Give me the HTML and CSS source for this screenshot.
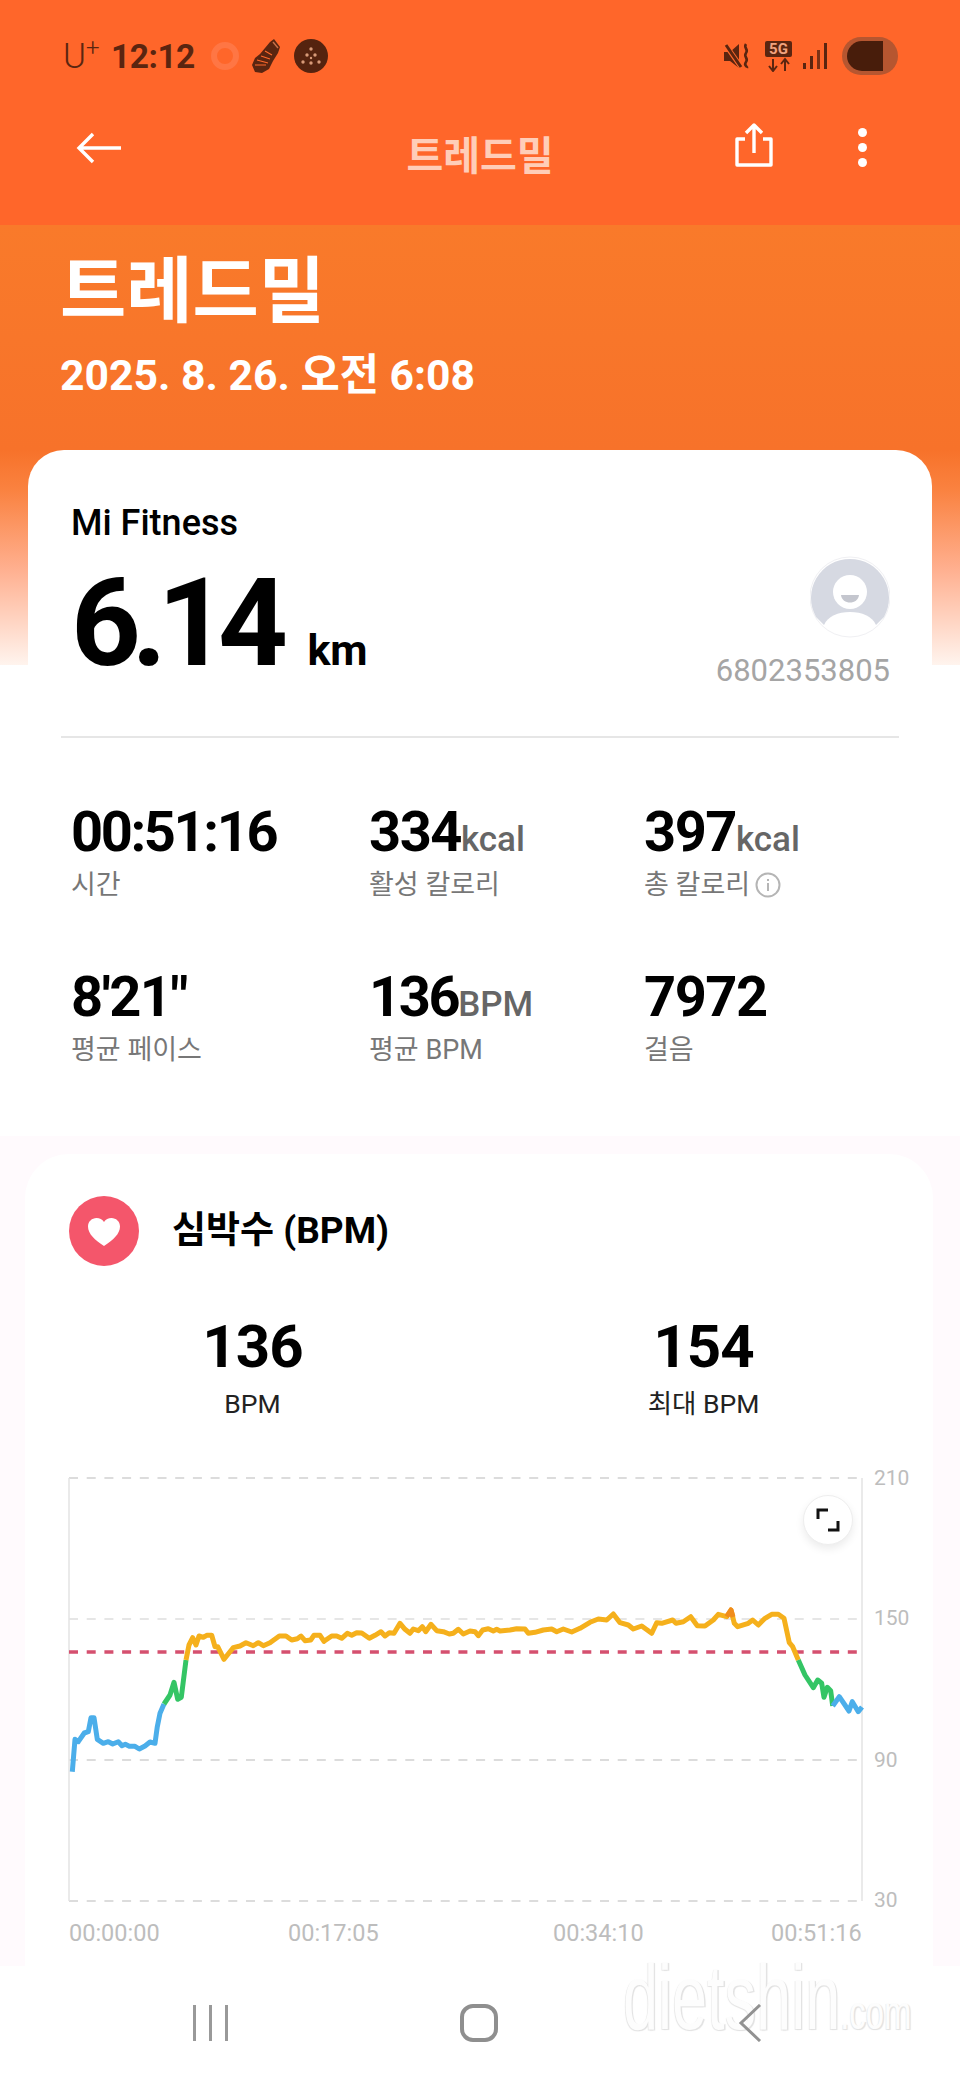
FILE: index.html
```html
<!DOCTYPE html>
<html lang="ko">
<head>
  <meta charset="UTF-8">
  <meta name="viewport" content="width=device-width, initial-scale=1">
  <title>트레드밀</title>
  <link rel="stylesheet" href="styles.css">
</head>
<body>
  <div class="page">
    <!-- status bar -->
    <div class="status">
      <div class="status-left">
        <span class="carrier">U<sup>+</sup></span>
        <span class="clock">12:12</span>
        <svg class="ico-ring" viewBox="0 0 28 28"><circle cx="14" cy="14" r="11" fill="none" stroke="#ff7644" stroke-width="6"/></svg>
        <svg class="ico-shoe" viewBox="0 0 29 34"><path d="M22 0l6 8-2 6-5 8-4 8-7 4-7-1-3-7 3-7 5-4 5-6 5-6z" fill="#5a2510"/><path d="M3 26l11 0M5 21l11 3M9 17l9 3M13 12l7 4" stroke="#ff6a2c" stroke-width="1.1" fill="none"/><path d="M21 3l5 6" stroke="#c9714a" stroke-width="1.4" fill="none"/></svg>
        <svg class="ico-dots" viewBox="0 0 34 34"><circle cx="17" cy="17" r="17" fill="#55230f"/><g fill="#d89a78"><circle cx="17" cy="10" r="1.7"/><circle cx="13" cy="16" r="1.7"/><circle cx="21" cy="16" r="1.7"/><circle cx="17" cy="19" r="1.2"/><circle cx="9" cy="23" r="1.7"/><circle cx="17" cy="24" r="1.7"/><circle cx="25" cy="23" r="1.7"/></g></svg>
      </div>
      <div class="status-right">
        <svg class="ico-mute" viewBox="0 0 27 26"><path d="M0 9h6l9-8v24l-9-7H0z" fill="#5a2510"/><path d="M1 1l16 23" stroke="#ff6a2c" stroke-width="5"/><path d="M2 2l15 22" stroke="#5a2510" stroke-width="3"/><path d="M22 1c-3 4 3 5 0 9s3 5 0 9 2 4 1 6" stroke="#5a2510" stroke-width="2.6" fill="none"/></svg>
        <svg class="ico-5g" viewBox="0 0 27 31"><rect width="27" height="16" rx="2" fill="#5a2510"/><path d="M8 18v11M4 25l4 5 4-5M20 30V19M16 23l4-5 4 5" stroke="#5a2510" stroke-width="2" fill="none"/></svg>
        <span class="tag-5g">5G</span>
        <svg class="ico-signal" viewBox="0 0 25 26"><g fill="#5a2510"><rect x="0" y="20" width="3" height="6"/><rect x="7" y="13" width="3" height="13"/><rect x="14" y="7" width="3" height="19" opacity=".8"/><rect x="21" y="0" width="3" height="26"/></g></svg>
        <div class="battery"><div class="battery-fill"></div></div>
      </div>
    </div>

    <!-- app bar -->
    <div class="appbar">
      <svg class="ico-back" viewBox="0 0 46 32"><path d="M45 16H3M17 2L3 16l14 14" fill="none" stroke="#fff" stroke-width="3.4"/></svg>
      <div class="appbar-title">트레드밀</div>
      <div class="appbar-actions">
        <svg class="ico-share" viewBox="0 0 38 44"><path d="M10 16H2v26h34V16h-8M19 30V3M11 10l8-8 8 8" fill="none" stroke="#fff" stroke-width="3.4" stroke-linejoin="round"/></svg>
        <div class="kebab"><i></i><i></i><i></i></div>
      </div>
    </div>

    <div class="hero">
      <h1>트레드밀</h1>
      <div class="hero-date">2025. 8. 26. 오전 6:08</div>
    </div>

    <!-- 요약 카드 -->
    <section class="summary">
      <div class="source">Mi Fitness</div>
      <div class="dist-row">
        <div class="dist"><span class="dist-num">6.14</span><span class="dist-unit">km</span></div>
        <div class="user">
          <svg class="avatar" viewBox="0 0 80 84">
            <circle cx="40" cy="42" r="40" fill="#fff" stroke="#f0f0f3" stroke-width="1"/>
            <path d="M6 62A39 39 0 1 1 74 62L66 70H14z" fill="#d6d9e2"/>
            <circle cx="40" cy="37" r="17" fill="#fff"/>
            <path d="M31 40h18c-1 10-17 10-18 0z" fill="#c4c6ce"/>
            <path d="M14 70c4-9 14-13 26-13s22 4 26 13c-12 14-40 14-52 0z" fill="#fff"/>
          </svg>
          <div class="user-id">6802353805</div>
        </div>
      </div>
      <div class="divider"></div>
      <div class="stats">
        <div class="stat"><div class="stat-val stat-tight">00:51:16</div><div class="stat-label">시간</div></div>
        <div class="stat"><div class="stat-val">334<small>kcal</small></div><div class="stat-label">활성 칼로리</div></div>
        <div class="stat">
          <div class="stat-val">397<small>kcal</small></div>
          <div class="stat-label">총 칼로리<svg class="ico-info" viewBox="0 0 26 26"><circle cx="13" cy="13" r="11.5" fill="none" stroke="#b5b5b5" stroke-width="2"/><path d="M13 11v8M13 7v2" stroke="#b5b5b5" stroke-width="2"/></svg></div>
        </div>
        <div class="stat"><div class="stat-val">8'21"</div><div class="stat-label">평균 페이스</div></div>
        <div class="stat"><div class="stat-val stat-tight">136<small>BPM</small></div><div class="stat-label">평균 BPM</div></div>
        <div class="stat"><div class="stat-val">7972</div><div class="stat-label">걸음</div></div>
      </div>
    </section>

    <!-- 심박수 -->
    <div class="lower">
      <section class="hr-card">
        <div class="hr-head">
          <svg class="ico-heart" viewBox="0 0 70 70"><circle cx="35" cy="35" r="35" fill="#f4566b"/><path d="M35 50C26 44 19 38 19 30.5 19 25.5 23 22 27.5 22c3 0 6 1.500 7.500 4 1.500-2.500 4.500-4 7.500-4C47 22 51 25.500 51 30.500 51 38 44 44 35 50z" fill="#fff"/></svg>
          <h2>심박수 (BPM)</h2>
        </div>
        <div class="hr-stats">
          <div class="hr-stat"><div class="hr-num">136</div><div class="hr-label">BPM</div></div>
          <div class="hr-stat"><div class="hr-num">154</div><div class="hr-label">최대 BPM</div></div>
        </div>
        <div class="chart">
          <!-- viewBox uses page coordinates -->
          <svg class="chart-svg" viewBox="60 1460 860 490">
            <g stroke="#dcdcdc" stroke-width="2" stroke-dasharray="9 8.7" fill="none">
              <path d="M69 1478H862"/>
              <path d="M69 1619H862" stroke="#e6e6e6"/>
              <path d="M69 1760H862"/>
              <path d="M69 1901H862"/>
            </g>
            <path d="M69 1478V1901M862 1478V1901" stroke="#e4e4e4" stroke-width="1.5" fill="none"/>
            <path d="M69 1652H862" stroke="#d5506f" stroke-width="3.5" stroke-dasharray="9 8.7" fill="none"/>
            <g fill="none" stroke-width="5" stroke-linejoin="round">
              <polyline stroke="#4baeea" points="72.3,1771.7 75,1739.3 78.3,1741.7 84.3,1733 88.3,1731.7 91,1717.7 94,1717.7 97.3,1739.3 103.3,1743.3 108.3,1741.7 112.7,1744 118.3,1741.7 122,1745.7 125.3,1744.3 129.3,1746.3 135,1746.3 139.3,1749 145,1746 150,1742 155,1743.3 157.3,1726.7 160,1713.3 164,1704"/>
              <polyline stroke="#34c565" points="164,1704 170,1695 174,1682.3 177.7,1699.3 181.3,1697.3 186,1660"/>
              <polyline stroke="#f5b01c" points="186,1660 189,1645 192.7,1637.7 196,1645 199,1636 203.3,1637.3 206.7,1635.3 211.7,1635.3 215,1646.7 217.7,1646.7 224,1659.3 230,1651.7 233.3,1647.7 240,1646 246,1642.7 253.3,1645.7 258.3,1642.7 263.3,1645.7 270,1642.7 279.3,1636 286,1636 291.7,1640 297.3,1638.7 301,1636 305,1640.7 310.7,1640 314,1635.3 320,1635.3 324,1641.3 331.7,1636 336.7,1636 341.7,1638.3 347.3,1633.3 351.7,1635.3 356.7,1632.7 361.7,1633 369.3,1638.3 375,1635.3 381,1631.7 385,1636 389.3,1632.7 394,1633.3 400,1623.3 405,1629.3 410,1633.3 413.3,1629 418.3,1630.7 422.3,1626.7 425.7,1631.7 431,1624.3 436.7,1630.7 443.3,1631.7 449.3,1634 453.3,1633.3 458.3,1629.3 463.3,1634 470,1631 475,1631.7 478.3,1635.7 482.7,1630 488.3,1628.7 493.3,1631 496.7,1629.3 500,1631 510,1630 516.7,1628.7 525,1629 528.3,1633.3 535,1632.3 543.3,1630 551.7,1629 556.7,1631.7 563.3,1629 571.7,1632 580,1628.3 590,1622.3 598.3,1619 606.7,1620 613.3,1614 620,1622.7 628.3,1625 633.3,1629 641.7,1626 651.7,1633.3 656.7,1622.7 661.7,1623.3 672.7,1620 676,1623.3 683.3,1621.7 690.7,1616.7 697.3,1625.7 705,1626 713.3,1620 718.3,1614.3 726.7,1616.7 731,1610 734.3,1623.3 737.7,1626.7 748.3,1623.3 752.7,1620 758.3,1625 765,1618.3 771.7,1614.3 778.3,1614.3 784,1618.3 789.3,1642.7 792.7,1646.7 798.3,1660"/>
              <polyline stroke="#f08c1c" points="726.7,1616.7 731,1610 733,1617"/>
              <polyline stroke="#34c565" points="798.3,1660 805,1675 813.3,1687.7 817.7,1680 821.7,1683.3 824,1697.3 827.3,1687.3 830.7,1690.7 832.7,1706"/>
              <polyline stroke="#4baeea" points="832.7,1706 839.3,1696.7 849,1711 852.3,1701.7 858.3,1711.7 862,1707"/>
            </g>
            <g class="axis-y">
              <text x="874" y="1485">210</text>
              <text x="874" y="1625">150</text>
              <text x="874" y="1767">90</text>
              <text x="874" y="1907">30</text>
            </g>
            <g class="axis-x">
              <text x="69" y="1941">00:00:00</text>
              <text x="288" y="1941">00:17:05</text>
              <text x="553" y="1941">00:34:10</text>
              <text x="771" y="1941">00:51:16</text>
            </g>
          </svg>
          <button class="expand">
            <svg viewBox="0 0 24 24"><path d="M2 11V2h10M22 13v9H12" fill="none" stroke="#111" stroke-width="3"/></svg>
          </button>
        </div>
      </section>
    </div>

    <!-- 하단 내비게이션 -->
    <div class="navbar">
      <div class="nav-recent"><i></i><i></i><i></i></div>
      <div class="nav-home"></div>
      <svg class="nav-back" viewBox="0 0 24 38"><path d="M22 1L3 19l19 18" fill="none" stroke="#929292" stroke-width="3"/></svg>
      <div class="watermark">dietshin<small>.com</small></div>
    </div>
  </div>
</body>
</html>
```

FILE: styles.css
```css
* {
  margin: 0;
  padding: 0;
  box-sizing: border-box;
}

body {
  background: #fff;
  font-family: Roboto, "Noto Sans CJK KR", sans-serif;
  color: #000;
}

.page {
  position: relative;
  width: 960px;
  height: 2080px;
  overflow: hidden;
  background:
    linear-gradient(#ff662a, #ff662a) 0 0 / 100% 225px no-repeat,
    linear-gradient(#f97a2a 0, #f7722a 225px, #fa8240 265px, #ffb090 345px, #fff4ee 440px) 0 225px / 100% 440px no-repeat,
    #fff;
}

/* status bar */
.status {
  height: 112px;
  padding: 0 62px 0 63px;
  display: flex;
  align-items: center;
  justify-content: space-between;
  color: #5a2510;
}

.status-left,
.status-right {
  display: flex;
  align-items: center;
}

.carrier {
  width: 48px;
  font-size: 35px;
  font-weight: 300;
  line-height: 1;
}

.carrier sup {
  font-size: 24px;
  line-height: 0;
  vertical-align: 12px;
}

.clock {
  font-size: 33.5px;
  font-weight: 700;
  letter-spacing: -.5px;
}

.ico-ring { width: 28px; height: 28px; margin-left: 16px; }
.ico-shoe { width: 29px; height: 34px; margin-left: 13px; }
.ico-dots { width: 34px; height: 34px; margin-left: 13px; }
.ico-mute { width: 27px; height: 26px; }
.ico-5g { width: 27px; height: 31px; margin-left: 14px; }
.ico-signal { width: 25px; height: 26px; margin-left: 11px; }

.tag-5g {
  width: 27px;
  margin-left: -27px;
  margin-top: -15px;
  text-align: center;
  font-size: 15px;
  font-weight: 700;
  color: #f2a27e;
}

.battery {
  width: 56px;
  height: 38px;
  margin-left: 14px;
  padding: 4px 0 0 5px;
  border-radius: 19px;
  background: #b65630;
}

.battery-fill {
  width: 36px;
  height: 30px;
  border-radius: 15px 0 0 15px;
  background: #481d0b;
}

/* app bar */
.appbar {
  height: 72px;
  padding: 0 76px;
  display: grid;
  grid-template-columns: 1fr auto 1fr;
  align-items: center;
}

.ico-back { width: 46px; height: 32px; }

.appbar-title {
  margin-top: 10px;
  font-size: 40px;
  font-weight: 700;
  color: #ffcdb8;
}

.appbar-actions {
  display: flex;
  justify-content: flex-end;
  align-items: center;
  gap: 85px;
  margin-right: 17px;
}

.ico-share { width: 38px; height: 44px; margin-top: -6px; }

.kebab {
  display: flex;
  flex-direction: column;
  gap: 6px;
  margin-top: -2px;
}

.kebab i {
  display: block;
  width: 9px;
  height: 9px;
  border-radius: 50%;
  background: #fff;
}

/* hero */
.hero {
  height: 266px;
  padding: 66px 0 0 60px;
  color: #fff;
}

.hero h1 {
  font-size: 72px;
  line-height: 84px;
  font-weight: 700;
}

.hero-date {
  margin-top: 16px;
  font-size: 42.7px;
  line-height: 50px;
  font-weight: 700;
}

/* summary card */
.summary {
  height: 687px;
  margin: 0 28px;
  padding-top: 53px;
  background: #fff;
  border-radius: 36px 36px 0 0;
}

.source {
  margin-left: 43px;
  font-size: 36px;
  line-height: 40px;
  font-weight: 500;
}

.dist-row {
  display: flex;
  justify-content: space-between;
  margin: 0 42px 0 43px;
  height: 193px;
}

.dist {
  padding-top: 16px;
  display: flex;
  align-items: baseline;
  height: 150px;
}

.dist-num {
  font-size: 122px;
  font-weight: 700;
  letter-spacing: -9.5px;
  line-height: 130px;
}

.dist-unit {
  margin-left: 29px;
  font-size: 43px;
  font-weight: 700;
}

.user {
  display: flex;
  flex-direction: column;
  align-items: flex-end;
  padding-top: 12px;
}

.avatar { width: 80px; height: 84px; }

.user-id {
  margin-top: 14px;
  font-size: 31px;
  line-height: 36px;
  color: #a5a5a5;
}

.divider {
  height: 2px;
  margin: 0 33px;
  background: #e6e6e6;
}

.stats {
  display: grid;
  grid-template-columns: 298px 275px 1fr;
  row-gap: 62px;
  margin: 63px 0 0 43px;
}

.stat-val {
  font-size: 56px;
  line-height: 62px;
  font-weight: 700;
  letter-spacing: -1.5px;
  white-space: nowrap;
}

.stat-tight {
  letter-spacing: -2.4px;
}

.stat-val small {
  font-size: 35px;
  line-height: 1;
  font-weight: 500;
  letter-spacing: 0;
  color: #666;
}

.stat-label {
  display: flex;
  align-items: center;
  gap: 5px;
  margin-top: 3px;
  font-size: 27px;
  line-height: 38px;
  color: #777;
}

.ico-info { width: 26px; height: 26px; }

/* heart rate */
.lower {
  height: 830px;
  margin-top: -1px;
  padding: 18px 27px 0 25px;
  background: #fffafd;
}

.hr-card {
  height: 812px;
  padding-top: 42px;
  background: #fff;
  border-radius: 44px 44px 0 0;
}

.hr-head {
  display: flex;
  align-items: center;
  gap: 33px;
  margin-left: 44px;
}

.ico-heart { width: 70px; height: 70px; }

.hr-head h2 {
  font-size: 37px;
  line-height: 70px;
  font-weight: 700;
}

.hr-stats {
  display: grid;
  grid-template-columns: 1fr 1fr;
  margin-top: 46px;
  padding: 0 2px 0 2px;
  text-align: center;
  width: 906px;
}

.hr-num {
  font-size: 60px;
  line-height: 70px;
  font-weight: 700;
  letter-spacing: -1px;
}

.hr-label {
  margin-top: 4px;
  font-size: 26.5px;
  line-height: 36px;
  color: #222;
}

.chart {
  position: relative;
  margin: 38px 0 0 35px;
  width: 860px;
  height: 490px;
}

.chart-svg {
  display: block;
  width: 860px;
  height: 490px;
}

.axis-y text,
.axis-x text {
  font-family: Roboto, sans-serif;
  font-size: 21px;
  fill: #bdbdbd;
}

.axis-x text {
  font-size: 23.5px;
}

/* floats over the plot */
.expand {
  position: absolute;
  left: 743px;
  top: 35px;
  width: 50px;
  height: 50px;
  display: flex;
  align-items: center;
  justify-content: center;
  border: 1px solid #eee;
  border-radius: 50%;
  background: #fff;
  box-shadow: 0 4px 8px rgba(0,0,0,.08);
}

.expand svg { width: 24px; height: 24px; }

/* bottom nav */
.navbar {
  position: relative;
  height: 113px;
  background: #fff;
  display: grid;
  grid-template-columns: 415px 290px 1fr;
  align-items: center;
}

.nav-recent {
  justify-self: end;
  margin-right: 187px;
  display: flex;
  gap: 13px;
}

.nav-recent i {
  display: block;
  width: 3px;
  height: 36px;
  background: #999;
}

.nav-home {
  width: 38px;
  height: 38px;
  margin-left: 45px;
  border: 4px solid #8f8f8f;
  border-radius: 13px;
}

.nav-back {
  position: relative;
  z-index: 1;
  width: 24px;
  height: 38px;
  margin-left: 33px;
}

/* site watermark over the nav bar */
.watermark {
  position: absolute;
  left: 623px;
  top: -19px;
  font-family: "Liberation Sans", sans-serif;
  font-size: 92px;
  line-height: 100px;
  color: #fdfdfd;
  text-shadow: 2px 1px 1px #e2e2e2, -1px 1px 1px #e6e6e6;
  white-space: nowrap;
  transform: scaleX(.685);
  transform-origin: left top;
}

.watermark small {
  font-size: 48px;
}
```
